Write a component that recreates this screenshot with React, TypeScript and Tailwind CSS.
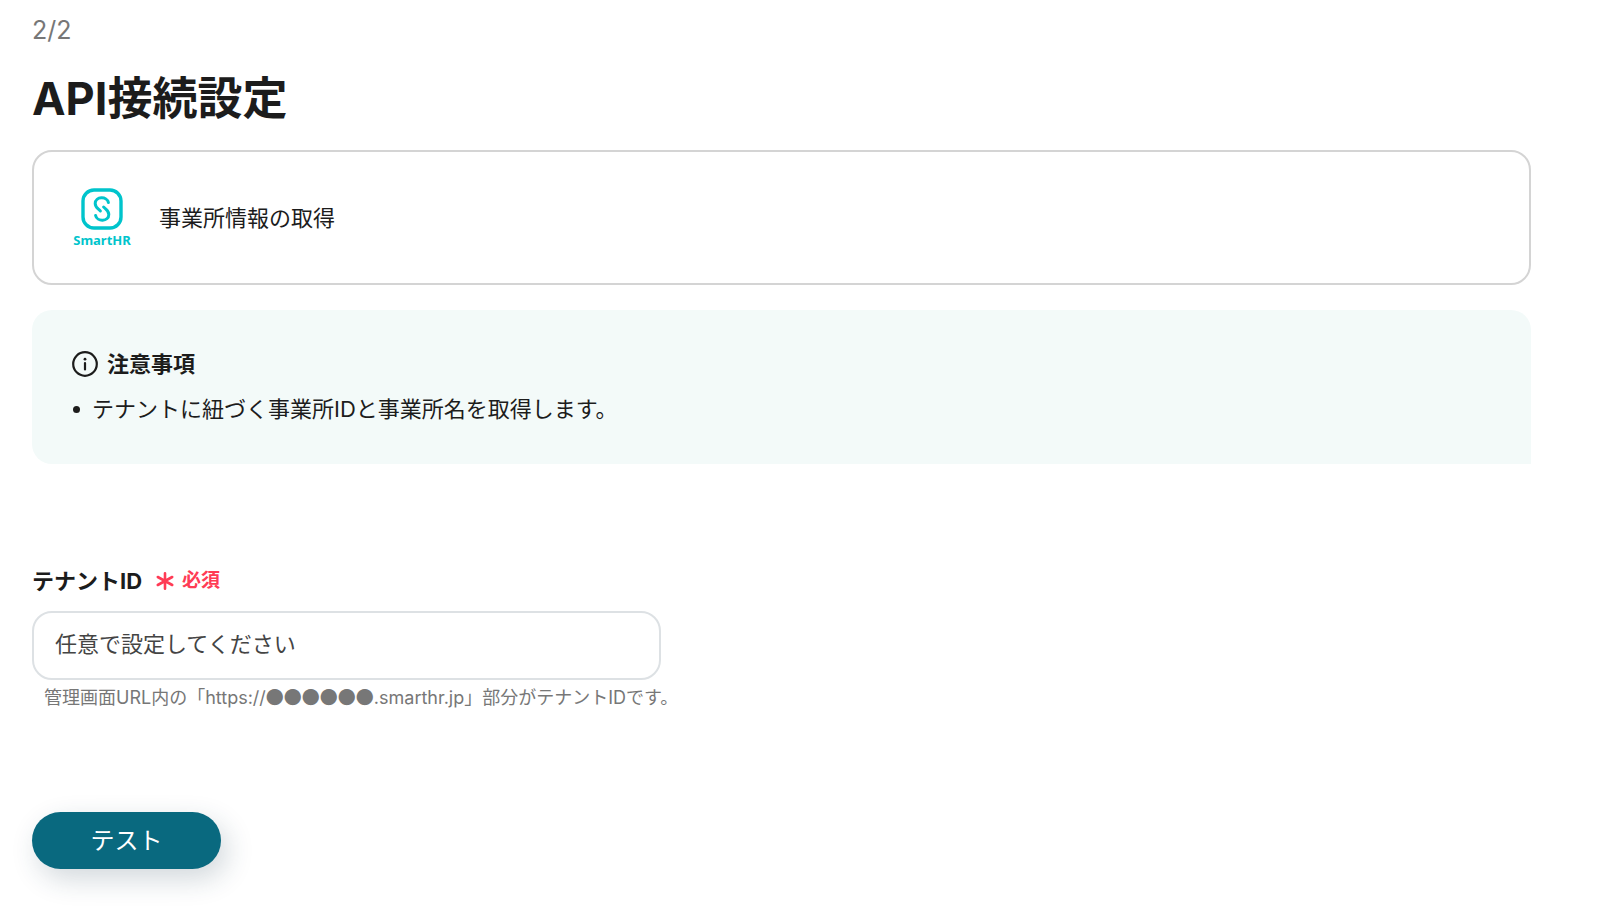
import { useState } from "react";

const SmartHRLogo = () => {
    return (
        <div className="flex w-[58px] flex-col items-center pt-[3px] text-[#00c4cc]">
            <svg width="42" height="42" viewBox="0 0 42 42" fill="none" stroke="currentColor" strokeLinecap="round" aria-hidden="true">
                <rect x="2" y="2" width="38" height="38" rx="11" strokeWidth="3.4" />
                <path d="M27.4 14.6 C26.2 8 14.2 8.2 14.2 15.6 C14.2 19.4 16.6 20.2 19.4 23" strokeWidth="3" />
                <path d="M14.6 27.4 C15.8 34 27.8 33.8 27.8 26.4 C27.8 22.6 25.4 21.8 22.6 19" strokeWidth="3" />
            </svg>
            <span className="font-['Noto_Sans',sans-serif] text-[13px] leading-5 font-bold">SmartHR</span>
        </div>
    );
};

const InfoIcon = () => {
    return (
        <svg width="26" height="26" viewBox="0 0 26 26" fill="none" stroke="currentColor" strokeWidth="2.2" aria-hidden="true">
            <circle cx="13" cy="13" r="11.8" />
            <path d="M13 12v6.5" strokeLinecap="round" />
            <circle cx="13" cy="8.2" r="1.4" fill="currentColor" stroke="none" />
        </svg>
    );
};

const RequiredMark = () => {
    return (
        <span className="flex items-center gap-2 text-[19px] font-bold text-[#ff3b55]">
            <svg width="18" height="18" viewBox="0 0 18 18" fill="none" stroke="currentColor" strokeWidth="2.6" strokeLinecap="round" aria-hidden="true">
                <path d="M9 1.3v15.4M1.8 5l14.4 8M16.2 5L1.8 13" />
            </svg>
            必須
        </span>
    );
};

const App = () => {
    const [tenantId, setTenantId] = useState("");

    return (
        <main className="bg-white pt-3 pr-[69px] pb-10 pl-8 font-['Inter','Noto_Sans_CJK_JP',sans-serif] text-[22px] leading-8 text-[#1c1c1c]">
            <p className="text-[25px] leading-9 text-[#777777]">2/2</p>
            <h1 className="mt-[18px] text-[45px] leading-[66px] font-bold">API接続設定</h1>

            <section className="mt-[18px] flex min-h-[135px] items-center gap-7 rounded-[20px] border-2 border-[#d4d4d4] px-[39px]">
                <SmartHRLogo />
                <p>事業所情報の取得</p>
            </section>

            <section className="mt-[25px] rounded-[20px] rounded-br-none bg-[#f3faf9] px-10 pt-[38px] pb-9">
                <h2 className="flex items-center gap-[9px] font-bold">
                    <InfoIcon />
                    注意事項
                </h2>
                <ul className="mt-[13px] pb-[3px]">
                    <li className="flex items-center gap-3">
                        <span className="flex size-2 items-center justify-center">
                            <span className="size-[7px] rounded-full bg-[#1c1c1c]" />
                        </span>
                        テナントに紐づく事業所IDと事業所名を取得します。
                    </li>
                </ul>
            </section>

            <form className="mt-[101px]" onSubmit={(e) => e.preventDefault()}>
                <label htmlFor="tenant-id" className="flex items-center gap-3.5 font-bold">
                    テナントID
                    <RequiredMark />
                </label>
                <input
                    id="tenant-id"
                    type="text"
                    value={tenantId}
                    onChange={(e) => setTenantId(e.target.value)}
                    placeholder="任意で設定してください"
                    aria-describedby="tenant-id-hint"
                    className="mt-3.5 block h-[69px] w-full max-w-[629px] rounded-[20px] border-2 border-[#dde1e4] px-[21px] pb-[3px] placeholder:text-[#444444]"
                />
                <p id="tenant-id-hint" className="pl-3 text-lg leading-8 text-[#777777]">
                    管理画面URL内の「https://<span className="font-['Noto_Sans_CJK_JP',sans-serif]">●●●●●●</span>.smarthr.jp」部分がテナントIDです。
                </p>
                <button
                    type="submit"
                    className="mt-[98px] h-[57px] w-[189px] rounded-full bg-[#09697f] text-2xl text-white shadow-[6px_10px_28px_rgba(30,60,80,0.2)]"
                >
                    テスト
                </button>
            </form>
        </main>
    );
};

export default App;
